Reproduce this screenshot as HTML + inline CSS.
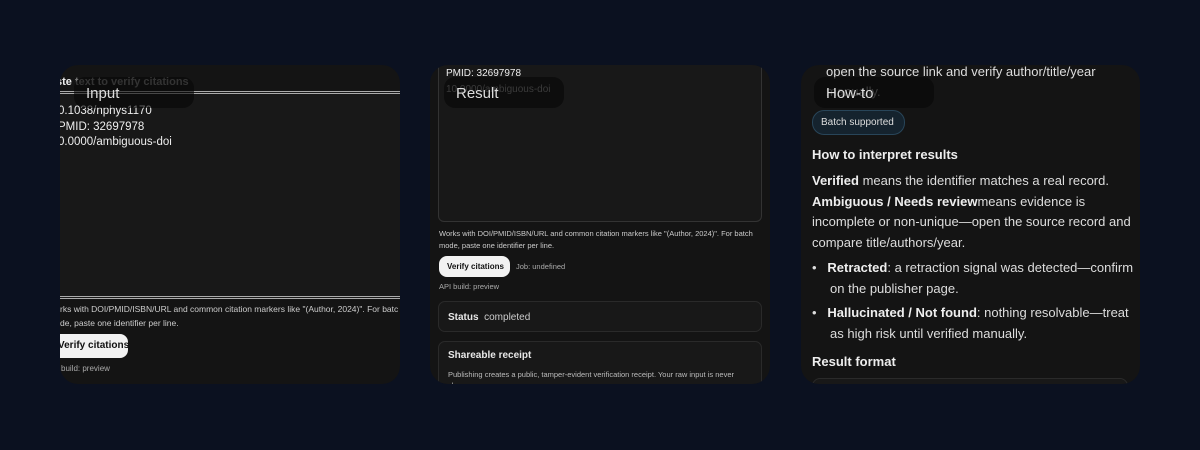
<!DOCTYPE html>
<html><head><meta charset="utf-8"><style>
*{box-sizing:border-box;margin:0;padding:0}
body{width:1200px;height:450px;background:#0b1120;font-family:"Liberation Sans",sans-serif;position:relative;overflow:hidden;color:#e8e8e8}
.card{position:absolute;top:65px;height:319px;background:#141414;border-radius:18px;overflow:hidden}
.abs{position:absolute;white-space:nowrap}
.pill{position:absolute;width:120px;height:31px;background:rgba(6,6,6,.6);border-radius:11px;color:#ddd;font-size:15px;padding:8px 0 0 12px;white-space:nowrap}
.btn{position:absolute;background:#f2f2f2;color:#111;font-weight:bold;border-radius:8px;white-space:nowrap}
.box{position:absolute;border:1px solid #2a2a2a;border-radius:7px;background:#181818}
</style></head><body>

<div class="card" style="left:60px;width:340px">
  <div class="abs" style="left:-4px;top:11px;font-size:11px;font-weight:bold;color:#eee">ste <span style="color:#777">text to verify citations</span></div>
  <div class="abs" style="left:0;top:26px;width:340px;height:208px;background:#181818;border-top:3px double #aaa;border-bottom:3px double #aaa"></div>
  <div class="abs" style="left:-2px;top:39px;font-size:11.5px;line-height:15.5px;color:#eee">0.1038/nphys1170<br>PMID: 32697978<br>0.0000/ambiguous-doi</div>
  <div class="abs" style="left:0;top:237px;font-size:8.5px;line-height:14px;color:#ccc">rks with DOI/PMID/ISBN/URL and common citation markers like "(Author, 2024)". For batc<br>de, paste one identifier per line.</div>
  <div class="btn" style="left:-20px;top:269px;width:88px;height:24px;font-size:10px;padding:6px 0 0 18px">Verify citations</div>
  <div class="abs" style="left:1px;top:299px;font-size:8px;color:#aaa">build: preview</div>
  <div class="pill" style="left:14px;top:12px">Input</div>
</div>

<div class="card" style="left:430px;width:340px">
  <div class="abs" style="left:8px;top:-20px;width:324px;height:177px;border:1px solid #333;border-radius:6px;background:#181818"></div>
  <div class="abs" style="left:16px;top:1px;font-size:10px;line-height:16px;color:#eee">PMID: 32697978<br><span style="color:#888">10.0000/ambiguous-doi</span></div>
  <div class="abs" style="left:9px;top:163px;font-size:7.5px;line-height:12px;color:#ccc">Works with DOI/PMID/ISBN/URL and common citation markers like "(Author, 2024)". For batch<br>mode, paste one identifier per line.</div>
  <div class="btn" style="left:9px;top:191px;width:71px;height:21px;font-size:8px;padding:6px 0 0 8px">Verify citations</div>
  <div class="abs" style="left:86px;top:197px;font-size:7.5px;color:#aaa">Job: undefined</div>
  <div class="abs" style="left:9px;top:217px;font-size:7.5px;color:#aaa">API build: preview</div>
  <div class="box" style="left:8px;top:236px;width:324px;height:31px;font-size:10px;padding:10px 0 0 9px"><b>Status</b> &nbsp;<span style="color:#ccc">completed</span></div>
  <div class="box" style="left:8px;top:276px;width:324px;height:60px;padding:8px 0 0 9px"><div style="font-size:10px;font-weight:bold">Shareable receipt</div><div style="font-size:7.5px;color:#bbb;margin-top:8px;line-height:11px">Publishing creates a public, tamper-evident verification receipt. Your raw input is never<br>shown.</div></div>
  <div class="pill" style="left:14px;top:12px">Result</div>
</div>

<div class="card" style="left:801px;width:339px;font-size:13px;color:#ddd">
  <div class="abs" style="left:25px;top:-3px;line-height:20px">open the source link and verify author/title/year<br><span style="color:#888">manually.</span></div>
  <div class="pill" style="left:13px;top:12px">How-to</div>
  <div class="abs" style="left:11px;top:45px;height:25px;width:93px;border:1px solid #284559;background:#15232e;border-radius:12px;font-size:10px;padding:6px 0 0 8px;color:#ddd">Batch supported</div>
  <div class="abs" style="left:11px;top:82px;font-weight:bold;color:#eee">How to interpret results</div>
  <div class="abs" style="left:11px;top:106px;line-height:20.5px"><b style="color:#eee">Verified</b> means the identifier matches a real record.<br><b style="color:#eee">Ambiguous / Needs review</b>means evidence is<br>incomplete or non-unique—open the source record and<br>compare title/authors/year.</div>
  <div class="abs" style="left:11px;top:193px;line-height:20.5px">•&nbsp;&nbsp; <b style="color:#eee">Retracted</b>: a retraction signal was detected—confirm<br>&nbsp;&nbsp;&nbsp;&nbsp; on the publisher page.</div>
  <div class="abs" style="left:11px;top:238px;line-height:20.5px">•&nbsp;&nbsp; <b style="color:#eee">Hallucinated / Not found</b>: nothing resolvable—treat<br>&nbsp;&nbsp;&nbsp;&nbsp; as high risk until verified manually.</div>
  <div class="abs" style="left:11px;top:289px;font-weight:bold;color:#eee">Result format</div>
  <div class="abs" style="left:11px;top:313px;width:316px;height:30px;border:1px solid #2a2a2a;border-radius:8px;background:#181818"></div>
</div>
</body></html>
